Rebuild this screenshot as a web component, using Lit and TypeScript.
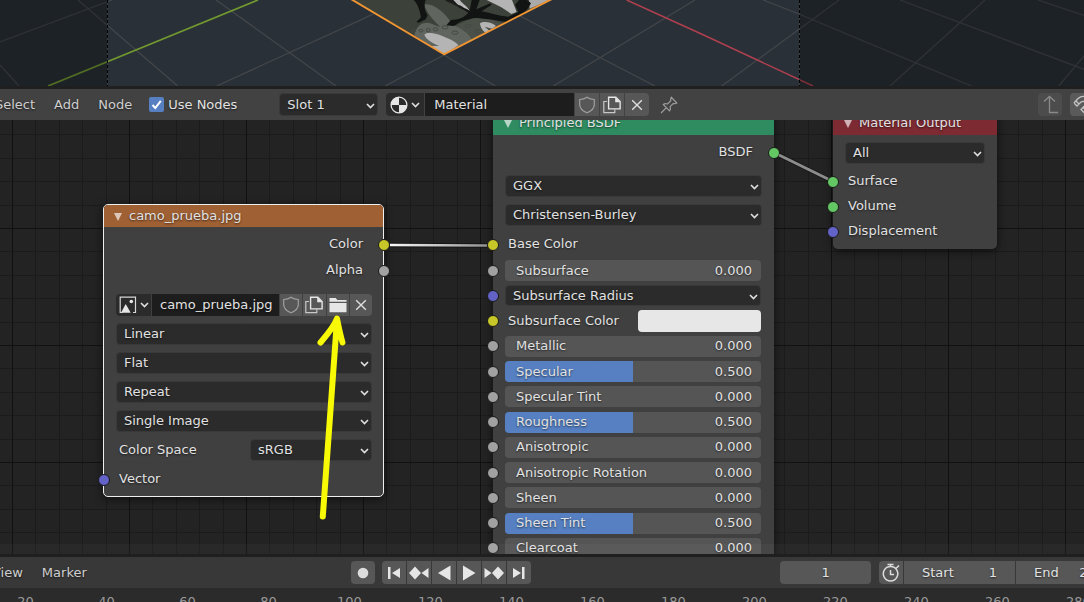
import { LitElement, html, svg, css } from "lit";
import { customElement } from "lit/decorators.js";

type Socket = "yellow" | "grey" | "blue" | "green";

interface Prop {
  kind: "field" | "select" | "color";
  label: string;
  socket: Socket;
  value?: number;
}

const PROPS: Prop[] = [
  { kind: "field", label: "Subsurface", socket: "grey", value: 0 },
  { kind: "select", label: "Subsurface Radius", socket: "blue" },
  { kind: "color", label: "Subsurface Color", socket: "yellow" },
  { kind: "field", label: "Metallic", socket: "grey", value: 0 },
  { kind: "field", label: "Specular", socket: "grey", value: 0.5 },
  { kind: "field", label: "Specular Tint", socket: "grey", value: 0 },
  { kind: "field", label: "Roughness", socket: "grey", value: 0.5 },
  { kind: "field", label: "Anisotropic", socket: "grey", value: 0 },
  { kind: "field", label: "Anisotropic Rotation", socket: "grey", value: 0 },
  { kind: "field", label: "Sheen", socket: "grey", value: 0 },
  { kind: "field", label: "Sheen Tint", socket: "grey", value: 0.5 },
  { kind: "field", label: "Clearcoat", socket: "grey", value: 0 },
];

const FRAMES = [20, 40, 60, 80, 100, 120, 140, 160, 180, 200, 220, 240, 260, 280];

const chevron = html`<svg class="chev" width="9" height="6" viewBox="0 0 9 6" aria-hidden="true">
  <path d="M1 1l3.5 3.5L8 1" fill="none" stroke="#e0e0e0" stroke-width="1.6" />
</svg>`;

const shieldIcon = html`<svg width="18" height="18" viewBox="0 0 18 18" aria-hidden="true">
  <path d="M9 1.2c2 1.5 4.600 2.200 7.300 2.300v5c0 3.800-3.200 6.600-7.300 8.300c-4.100-1.700-7.300-4.500-7.300-8.300v-5C4.400 3.400 7 2.700 9 1.200z"
    fill="none" stroke="#a0a0a0" stroke-width="1.200" />
</svg>`;

const copyIcon = html`<svg width="18" height="18" viewBox="0 0 18 18" aria-hidden="true">
  <path d="M4 5.500H.8v11.200h11V13.500" fill="none" stroke="#c8c8c8" stroke-width="1.200" />
  <path d="M5.600 1.300h7.200l4.300 4.200v7.400H5.600z" fill="none" stroke="#e6e6e6" stroke-width="1.400" />
  <path d="M12.200 1l5.200 5.200h-5.200z" fill="#e6e6e6" />
</svg>`;

const closeIcon = html`<svg width="12" height="12" viewBox="0 0 12 12" aria-hidden="true">
  <path d="M1.200 1.200l9.600 9.600M10.800 1.200l-9.600 9.600" stroke="#dedede" stroke-width="1.400" />
</svg>`;

const folderIcon = html`<svg width="18" height="16" viewBox="0 0 18 16" aria-hidden="true">
  <path d="M.5 1h6.300l1.500 2H17.500v1.800H.5z" fill="#e6e6e6" />
  <path d="M.5 6h17v9.200H.5z" fill="#e6e6e6" />
</svg>`;

const imageIcon = html`<svg width="18" height="18" viewBox="0 0 18 18" aria-hidden="true">
  <path d="M3.500 16.500H1.200V1.200h15.300v15.300h-2.500" fill="none" stroke="#d8d8d8" stroke-width="1.200" />
  <path d="M2 16.800L6.700 8l5 8.800z" fill="#e6e6e6" />
  <circle cx="12.300" cy="5.500" r="1.800" fill="#e6e6e6" />
</svg>`;

const sphereIcon = html`<svg width="18" height="18" viewBox="0 0 18 18" aria-hidden="true">
  <circle cx="9" cy="9" r="7.900" fill="none" stroke="#e6e6e6" stroke-width="1.300" />
  <path d="M9 9V1A8 8 0 0 0 1 9zM9 9v8a8 8 0 0 0 8-8z" fill="#e6e6e6" />
</svg>`;

const pinIcon = html`<svg width="18" height="18" viewBox="0 0 18 18" aria-hidden="true">
  <path d="M1 17l5.500-5.500M3.300 8.500l6.300 6.300c1.100-1.300 1.100-2.700.5-4.100l3.200-3.200c1.300.4 2.400.3 3.500-.5L11.300 1.300c-.8 1.100-.9 2.200-.5 3.500L7.500 8c-1.400-.6-2.900-.6-4.200.5z"
    fill="none" stroke="#9a9a9a" stroke-width="1.200" />
</svg>`;

@customElement("app-root")
export class AppRoot extends LitElement {
  static styles = css`
    :host {
      display: grid;
      grid-template-rows: 86px auto minmax(0, 1fr) auto auto;
      height: 100vh;
      overflow: hidden;
      background: #1f1f1f;
      color: #e2e2e2;
      font: 13px/20px "DejaVu Sans", sans-serif;
      text-shadow: 0 1px 2px rgba(0, 0, 0, 0.6);
    }
    * { box-sizing: border-box; }
    svg { display: block; flex: none; }
    button, input, select {
      font: inherit;
      color: inherit;
      text-shadow: inherit;
      border: 0;
      margin: 0;
      padding: 0;
      min-width: 0;
      background: none;
      border-radius: 0;
      outline: 0;
    }
    button { display: flex; align-items: center; justify-content: center; }
    .viewport { overflow: hidden; background: #293037; }
    .viewport svg { width: 100%; height: 86px; }

    .bar {
      display: flex;
      align-items: center;
      height: 31px;
      overflow: hidden;
      white-space: nowrap;
      background: #424242;
    }
    .bar-top { margin-top: 3px; }
    .bar-time { margin-top: 3px; background: #383838; }
    .menus { display: flex; gap: 19px; color: #cfcfcf; }
    .bar-top .menus { margin-left: -5px; }
    .bar-time .menus { margin-left: -8px; }
    .check { display: flex; align-items: center; gap: 4px; margin-left: 17px; }
    .check input {
      appearance: none;
      width: 15px;
      height: 15px;
      grid-area: 1 / 1;
      border-radius: 2px;
      background: #5680c2;
    }
    .box { display: grid; place-items: center; }
    .box svg { grid-area: 1 / 1; pointer-events: none; }

    .pick {
      display: grid;
      grid-template-columns: minmax(0, 1fr) 11px;
      align-items: center;
      height: 22px;
      border: 1px solid #393939;
      border-radius: 4px;
      background: #2b2b2b;
    }
    .pick select {
      grid-area: 1 / 1 / 2 / 3;
      appearance: none;
      width: 100%;
      height: 20px;
      padding: 0 16px 0 7px;
      line-height: 20px;
    }
    .pick .chev { grid-area: 1 / 2; margin-top: 2px; pointer-events: none; }
    .bar .pick { width: 99px; height: 23px; margin-left: 42px; }

    .group { display: flex; gap: 1px; border-radius: 4px; overflow: hidden; }
    .group .btn { border-radius: 0; }
    .btn {
      width: 24px;
      height: 23px;
      border-radius: 4px;
      background: #575757;
    }
    .btn.dark { width: 38px; gap: 3px; background: #2b2b2b; }
    .name {
      width: 149px;
      padding: 0 9px;
      background: #1d1d1d;
    }
    .material { margin-left: 8px; }
    .pin { margin-left: 11px; }
    .right { display: flex; gap: 8px; margin-left: auto; margin-right: -10px; }
    .right .btn { background: #5a5a5a; }
    .right .btn.off { background: #4c4c4c; }

    .canvas {
      position: relative;
      overflow: hidden;
      background: #232323;
    }
    .grid, .links, .arrow {
      position: absolute;
      top: 0;
      left: 0;
      width: 100%;
      height: 100%;
      pointer-events: none;
    }
    .scroll {
      position: absolute;
      left: 0;
      right: 0;
      bottom: 0;
      height: 10px;
      background: rgba(255, 255, 255, 0.03);
    }

    .node {
      position: absolute;
      border-radius: 5px;
      background: rgba(66, 66, 66, 0.95);
      box-shadow: 0 2px 8px rgba(0, 0, 0, 0.6);
    }
    .image { top: 84px; left: 103px; width: 281px; border: 1px solid #eee; }
    .bsdf { top: -8px; left: 493px; width: 281px; }
    .output { top: -8px; left: 833px; width: 164px; }
    .title {
      display: flex;
      align-items: center;
      gap: 7px;
      height: 23px;
      padding: 0 11px 2px;
      border-radius: 4px 4px 0 0;
    }
    .image .title { height: 22px; padding: 0 10px; background: #9f6034; }
    .bsdf .title { background: #2e8c60; }
    .output .title { background: #7d2a32; }
    .title svg { margin-top: 2px; }
    .body { padding: 4px 12px 7px; }
    .image .body { padding: 4px 11px 6px 12px; }
    .row {
      position: relative;
      display: flex;
      align-items: center;
      height: 22px;
    }
    .row.out { height: 26px; justify-content: flex-end; padding-right: 9px; }
    .label { flex: 1; padding-left: 3px; }
    .stack { display: grid; gap: 7px; }
    .image .stack { margin-top: 11px; }
    .socket {
      position: absolute;
      left: -18px;
      top: 50%;
      width: 12px;
      height: 12px;
      margin-top: -5px;
      border: 1px solid #1a1a1a;
      border-radius: 50%;
    }
    .out .socket { left: auto; right: -18px; }
    .yellow { background: #c7c729; }
    .grey { background: #a1a1a1; }
    .blue { background: #6363c7; }
    .green { background: #63c763; }

    .ids .btn { width: auto; flex: 1; height: 22px; }
    .ids .btn.dark { flex: none; width: 35px; }
    .ids .name { flex: none; width: 127px; padding: 0 2px 0 8px; }
    .space { width: 122px; }

    .bsdf .row.out { margin-bottom: 10px; }
    .props {
      display: flex;
      flex-direction: column;
      justify-content: space-between;
      height: 299px;
      margin-top: 5px;
      padding-right: 1px;
    }
    .props .row, .props .pick { height: 21px; }
    .props .row > .pick { flex: 1; }
    .props .socket { margin-top: -6px; }
    .field {
      flex: 1;
      display: flex;
      align-items: center;
      height: 21px;
      padding: 0 9px 0 11px;
      border-radius: 4px;
      overflow: hidden;
      background-color: #555;
      background-image: linear-gradient(#5680c2, #5680c2);
      background-repeat: no-repeat;
    }
    .field label { flex: 1; white-space: nowrap; }
    .field input { width: 50px; height: 20px; text-align: right; }
    .swatch { width: 123px; height: 22px; border-radius: 4px; background: #e7e7e7; }

    .output .pick { margin: 3px 0 6px; height: 22px; }
    .output .rows { display: grid; gap: 3px; }

    .rec { flex: none; margin-left: 15px; }
    .play { flex: none; margin-left: 7px; }
    .fill { flex: 1; }
    .frame {
      flex: none;
      width: 91px;
      height: 23px;
      border-radius: 4px;
      background: #575757;
      text-align: center;
    }
    .range { flex: none; margin: 0 -38px 0 8px; }
    .num {
      display: flex;
      align-items: center;
      height: 23px;
      padding: 0 18px;
      background: #575757;
    }
    .num label { flex: 1; }
    .num input { width: 30px; text-align: right; }
    .start { width: 111px; }
    .end { width: 106px; }

    .ruler {
      display: flex;
      height: 14px;
      margin-left: -15px;
      padding-top: 4px;
      overflow: hidden;
      background: #2b2b2b;
      color: #9a9a9a;
      text-shadow: none;
    }
    .ruler span { flex: 0 0 81px; text-align: center; }
  `;

  private pick(label: string, options: string[]) {
    return html`<div class="pick">
      <select aria-label=${label}>${options.map((o) => html`<option>${o}</option>`)}</select>
      ${chevron}
    </div>`;
  }

  private socket(color: Socket) {
    return html`<span class="socket ${color}"></span>`;
  }

  private title(text: string) {
    return html`<div class="title">
      <svg width="8" height="8" viewBox="0 0 8 8" aria-hidden="true"><path d="M0 0h8L4 8z" fill="#fff" opacity=".65" /></svg>
      <span>${text}</span>
    </div>`;
  }

  private prop(p: Prop, i: number) {
    const id = `prop-${i}`;
    if (p.kind === "select") {
      return html`<div class="row">${this.socket(p.socket)}${this.pick(p.label, [p.label])}</div>`;
    }
    if (p.kind === "color") {
      return html`<div class="row">
        ${this.socket(p.socket)}<span class="label">${p.label}</span>
        <button class="swatch" aria-label=${p.label}></button>
      </div>`;
    }
    const value = p.value ?? 0;
    return html`<div class="row">
      ${this.socket(p.socket)}
      <div class="field" style="background-size: ${value * 100}% 100%">
        <label for=${id}>${p.label}</label>
        <input id=${id} type="text" .value=${value.toFixed(3)} />
      </div>
    </div>`;
  }

  private viewport() {
    const lines = [
      "M0 42L112 0", "M0 65L19 86", "M78 0L177.700 86", "M216 0L336 86", "M216.700 86L362 19.300L390 6",
      "M385 86L444 55L495.300 86", "M520 16L655 86", "M553.300 86L695 0", "M763 0L799 14L915 62.700L971.700 86",
      "M721.700 86L839 0", "M890 86L985 0", "M900 0L1084 69.300", "M1038 0L1084 15.500", "M1058.700 86L1084 56",
    ];
    return html`<svg viewBox="0 0 1084 86" preserveAspectRatio="xMidYMid slice" aria-hidden="true">
      <g fill="none" stroke="#43464a" stroke-width="1.300">${lines.map((d) => svg`<path d=${d} />`)}</g>
      <path d="M258 0L48 86" stroke="#71992f" stroke-width="1.700" />
      <path d="M626.700 0L702 34.300L813 86" fill="none" stroke="#b0404f" stroke-width="1.500" />
      <path d="M0 0h107.500v86H0zM799.500 0H1084v86H799.500z" fill="#000" opacity=".28" />
      <path d="M107.500 0V86M799.500 0V86" stroke="#3b4045" />
      <path d="M107.500 0V86M799.500 0V86" stroke="#000" stroke-dasharray="3 2" />
      <clipPath id="plane"><path d="M352 0L444 54.500L550 0z" /></clipPath>
      <g clip-path="url(#plane)">
        <g transform="translate(345 0) scale(.33333)">
          <path d="M0 0h640v180H0z" fill="#3c4239" />
          <path d="M238 14c20-8 60 18 84 60 20 8 40 16 62 44l-86 50-90-62c6-25 18-38 38-38 14 0 20 8 40 12-20-18-40-40-48-66z" fill="#60655f" />
          <path d="M330 78c30-14 60-30 100-24l50 20-100 45c-10-20-24-32-50-41z" fill="#4b5149" />
          <path d="M238 104c6-10 40-4 68 10 20 8 30 16 34 22l-44 30-40-28 26 0c-16-8-38-18-44-34z" fill="#b4b4b4" />
          <path d="M425 0h76l14 36-16 6-30-20z" fill="#b4b4b4" />
          <path d="M300 0h40l35 28-6 6-26-10c-10-10-30-14-43-24z" fill="#1b1d1c" />
          <path d="M325 0h20c4 10 22 16 30 34l-12-4c-6-8-14-14-24-16z" fill="#b8b8b8" />
          <path d="M405 70c12-8 36-2 48 8l-12 8-22-6 16 14-14 4c-8-6-16-18-16-28z" fill="#b4b4b4" />
          <path d="M552 0h62l-60 26z" fill="#aaa" />
          <path d="M206 0h36c-6 14-4 32 6 46l-6 12-20 10-8-2 14-14c-4-22-10-40-22-52z" fill="#111413" />
          <path d="M304 76l14-16c30-2 40-10 52-22l-22-14c10 0 18 2 26 8l6-32h24l-10 28 42-18 4 4-30 20c24 4 50 14 80 16l30-14-10-22 12-14h24l12 10-10 16-12 14-40 28c-40-6-80-14-110-14l-36 10c-12 6-20 14-26 14z" fill="#111413" />
          <g fill="none" stroke="#454a44" stroke-width="3">
            <ellipse cx="330" cy="98" rx="9" ry="5" /><ellipse cx="369" cy="78" rx="9" ry="5" />
            <ellipse cx="398" cy="95" rx="9" ry="5" /><ellipse cx="300" cy="82" rx="9" ry="5" />
            <ellipse cx="272" cy="88" rx="7" ry="5" /><ellipse cx="250" cy="90" rx="6" ry="5" />
            <ellipse cx="228" cy="92" rx="6" ry="4" /><ellipse cx="205" cy="93" rx="6" ry="4" />
          </g>
        </g>
      </g>
      <path d="M350 -1.500L444 54.300L553 -1.500" fill="none" stroke="#f19533" stroke-width="1.900" stroke-linejoin="round" />
    </svg>`;
  }

  private canvasGrid() {
    const minor = [23.5, 47.5, 70.5, 94.5];
    return html`<svg class="grid" aria-hidden="true">
      <defs>
        <pattern id="cells" x="12" y="-9" width="117" height="117" patternUnits="userSpaceOnUse">
          ${minor.map((m) => svg`<path d="M${m} 0V117M0 ${m}H117" stroke="#1b1b1b" />`)}
          <path d="M.5 0V117M0 .5H117" stroke="#111" />
        </pattern>
      </defs>
      <rect width="100%" height="100%" fill="url(#cells)" />
    </svg>`;
  }

  private imageNode() {
    return html`<section class="node image">
      ${this.title("camo_prueba.jpg")}
      <div class="body">
        <div class="row out"><span>Color</span>${this.socket("yellow")}</div>
        <div class="row out"><span>Alpha</span>${this.socket("grey")}</div>
        <div class="stack">
          <div class="group ids">
            <button class="btn dark" aria-label="Browse image">${imageIcon}${chevron}</button>
            <input class="name" type="text" aria-label="Image name" .value=${"camo_prueba.jpg"} />
            <button class="btn" aria-label="Fake user">${shieldIcon}</button>
            <button class="btn" aria-label="New image">${copyIcon}</button>
            <button class="btn" aria-label="Open image">${folderIcon}</button>
            <button class="btn" aria-label="Unlink image">${closeIcon}</button>
          </div>
          ${this.pick("Interpolation", ["Linear"])}
          ${this.pick("Projection", ["Flat"])}
          ${this.pick("Extension", ["Repeat"])}
          ${this.pick("Source", ["Single Image"])}
          <div class="row">
            <span class="label">Color Space</span>
            <div class="space">${this.pick("Color Space", ["sRGB"])}</div>
          </div>
          <div class="row">${this.socket("blue")}<span class="label">Vector</span></div>
        </div>
      </div>
    </section>`;
  }

  private bsdfNode() {
    return html`<section class="node bsdf">
      ${this.title("Principled BSDF")}
      <div class="body">
        <div class="row out"><span>BSDF</span>${this.socket("green")}</div>
        <div class="stack">
          ${this.pick("Distribution", ["GGX"])}
          ${this.pick("Subsurface method", ["Christensen-Burley"])}
          <div class="row">${this.socket("yellow")}<span class="label">Base Color</span></div>
        </div>
        <div class="props">${PROPS.map((p, i) => this.prop(p, i))}</div>
      </div>
    </section>`;
  }

  private outputNode() {
    const inputs: [string, Socket][] = [["Surface", "green"], ["Volume", "green"], ["Displacement", "blue"]];
    return html`<section class="node output">
      ${this.title("Material Output")}
      <div class="body">
        ${this.pick("Target", ["All"])}
        <div class="rows">
          ${inputs.map(([l, s]) => html`<div class="row">${this.socket(s)}<span class="label">${l}</span></div>`)}
        </div>
      </div>
    </section>`;
  }

  private playButton(label: string, d: string) {
    return html`<button class="btn" aria-label=${label}>
      <svg width="20" height="16" viewBox="0 0 20 16" aria-hidden="true"><path d=${d} fill="#e6e6e6" /></svg>
    </button>`;
  }

  render() {
    return html`
      <div class="viewport">${this.viewport()}</div>

      <header class="bar bar-top">
        <nav class="menus"><span>Select</span><span>Add</span><span>Node</span></nav>
        <label class="check">
          <span class="box">
            <input type="checkbox" checked />
            <svg width="13" height="13" viewBox="0 0 13 13" aria-hidden="true">
              <path d="M2.500 7l2.800 3L10.800 2.800" fill="none" stroke="#fff" stroke-width="2" />
            </svg>
          </span>
          Use Nodes
        </label>
        ${this.pick("Slot", ["Slot 1"])}
        <div class="group material">
          <button class="btn dark" aria-label="Browse material">${sphereIcon}${chevron}</button>
          <input class="name" type="text" aria-label="Material name" .value=${"Material"} />
          <button class="btn" aria-label="Fake user">${shieldIcon}</button>
          <button class="btn" aria-label="New material">${copyIcon}</button>
          <button class="btn" aria-label="Unlink material">${closeIcon}</button>
        </div>
        <button class="pin" aria-label="Pin">${pinIcon}</button>
        <div class="right">
          <button class="btn off" aria-label="Parent node tree">
            <svg width="18" height="19" viewBox="0 0 18 19" aria-hidden="true">
              <path d="M3 6.500L8.500 1.500L14 6.500M8.500 2V17.500H17" fill="none" stroke="#8a8a8a" stroke-width="1.300" />
            </svg>
          </button>
          <button class="btn" aria-label="Snap">
            <svg width="19" height="19" viewBox="0 0 19 19" aria-hidden="true">
              <path d="M1 8L5 3.500C9 0 14 1 17 4.500M1 8L4 11L8 7C9.500 6 11 6 12 7.500C13 9 12.500 10 11.500 11L8 14.500L11 17.500L15 13.500M3 6L6 9M10 12.500L13 15.500"
                fill="none" stroke="#c4c4c4" stroke-width="1.300" />
            </svg>
          </button>
        </div>
      </header>

      <main class="canvas">
        ${this.canvasGrid()}
        ${this.outputNode()} ${this.imageNode()} ${this.bsdfNode()}
        <svg class="links" aria-hidden="true">
          <defs>
            <linearGradient id="wire" gradientUnits="userSpaceOnUse" x1="384" y1="0" x2="492" y2="0">
              <stop offset="0" stop-color="#fff" /><stop offset="1" stop-color="#8c8c8c" />
            </linearGradient>
          </defs>
          <path d="M390 125L487 125.500M779 35L828 59" stroke="#111" stroke-width="4.500" opacity=".7" />
          <path d="M390 125L487 125.500" stroke="url(#wire)" stroke-width="2.600" />
          <path d="M779 35L828 59" stroke="#8c8c8c" stroke-width="3" />
        </svg>
        <div class="scroll"></div>
        <svg class="arrow" aria-hidden="true">
          <path d="M322.800 396.500L337 200M320.500 222.500C326 216 334 207 337 198.500C338.500 206 340 214 342.500 222.500"
            fill="none" stroke="#f8fa05" stroke-width="6" stroke-linecap="round" stroke-linejoin="round" />
        </svg>
      </main>

      <footer class="bar bar-time">
        <nav class="menus"><span>View</span><span>Marker</span></nav>
        <div class="fill"></div>
        <button class="btn rec" aria-label="Auto keying">
          <svg width="12" height="12" viewBox="0 0 12 12" aria-hidden="true"><circle cx="6" cy="6" r="5.300" fill="#dcdcdc" /></svg>
        </button>
        <div class="group play">
          ${this.playButton("Jump to start", "M4 2h2.500v12H4zM16 3v10L8 8z")}
          ${this.playButton("Previous keyframe", "M0 8L6 1.500L12 8L6 14.500zM19.500 3v10L12.500 8z")}
          ${this.playButton("Play reversed", "M16.500 .5v15L4 8z")}
          ${this.playButton("Play", "M4 .5v15L16.500 8z")}
          ${this.playButton("Next keyframe", "M.5 3v10L7.500 8zM8 8L14 1.500L20 8L14 14.500z")}
          ${this.playButton("Jump to end", "M4 3v10L12 8zM13 2h2.500v12H13z")}
        </div>
        <div class="fill"></div>
        <input class="frame" type="text" aria-label="Current frame" .value=${"1"} />
        <div class="group range">
          <button class="btn" aria-label="Use preview range">
            <svg width="18" height="20" viewBox="0 0 18 20" aria-hidden="true">
              <path d="M8.500 3.500a7.200 7.200 0 1 0 .1 0zM8.500 3.500V1.500M5.500 1.500H11.500M8.500 7V11.500H12M14 5.500L17 2.500"
                fill="none" stroke="#dcdcdc" stroke-width="1.500" />
            </svg>
          </button>
          <div class="num start"><label for="start">Start</label><input id="start" type="text" .value=${"1"} /></div>
          <div class="num end"><label for="end">End</label><input id="end" type="text" .value=${"250"} /></div>
        </div>
      </footer>

      <div class="ruler">${FRAMES.map((f) => html`<span>${f}</span>`)}</div>
    `;
  }
}
